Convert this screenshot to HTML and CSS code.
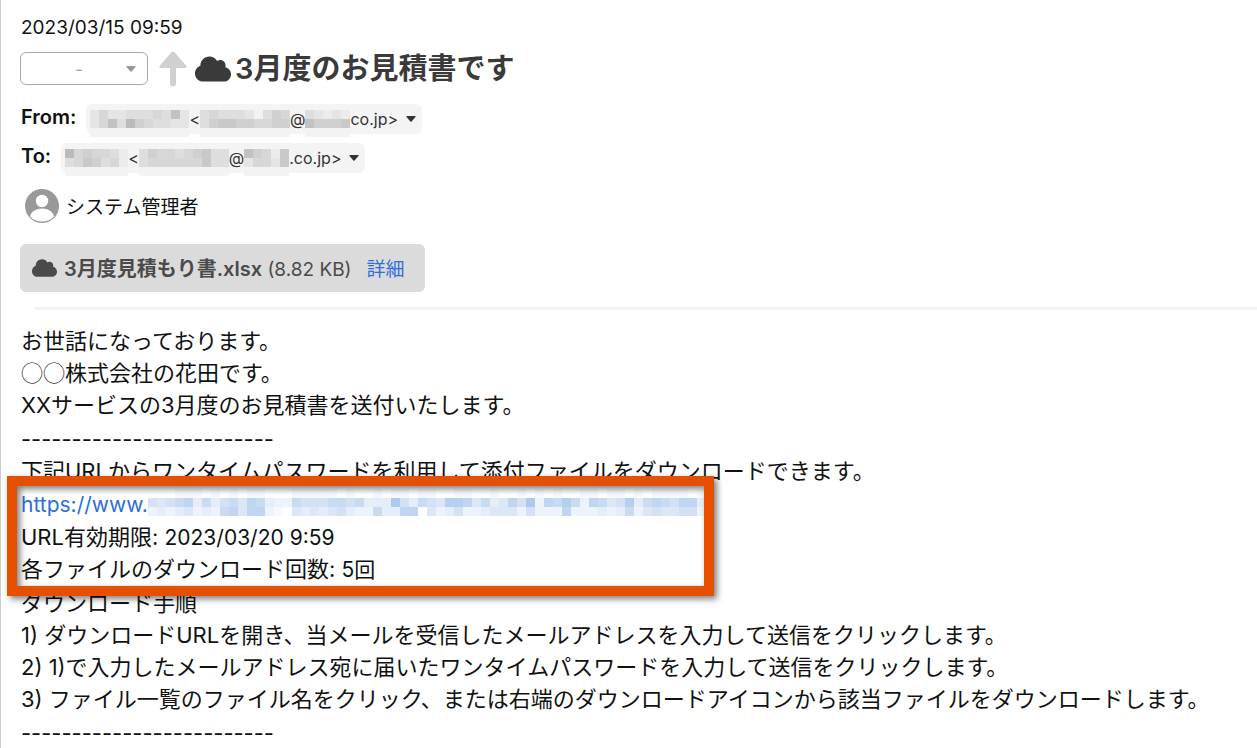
FILE: index.html
```html
<!DOCTYPE html>
<html lang="ja">
<head>
    <meta charset="UTF-8">
    <meta name="viewport" content="width=device-width, initial-scale=1.0">
    <title>3月度のお見積書です</title>
    <link rel="stylesheet" href="styles.css">
</head>
<body>

    <!-- Shared icons -->
    <svg class="icon-defs" aria-hidden="true">
        <symbol id="icon-cloud" viewBox="0 32 640 448">
            <path d="M537.6 226.600c4.100-10.700 6.400-22.400 6.400-34.600 0-53-43-96-96-96-19.700 0-38.100 6-53.300 16.200C367 64.200 315.300 32 256 32c-88.400 0-160 71.600-160 160 0 2.700.1 5.400.2 8.100C40.200 219.800 0 273.200 0 336c0 79.500 64.500 144 144 144h368c70.700 0 128-57.300 128-128 0-61.900-44-113.600-102.400-125.400z"/>
        </symbol>
        <symbol id="icon-caret" viewBox="0 0 10 6">
            <path d="M1 0h8q1 0 .5.900L5.600 5.500q-.6.600-1.200 0L.5.900Q0 0 1 0z"/>
        </symbol>
    </svg>

    <main class="mail">
        <!-- Mail header -->
        <time class="mail-date" datetime="2023-03-15T09:59">2023/03/15 09:59</time>

        <div class="subject-row">
            <div class="status">
                <select class="status-select" aria-label="ステータス">
                    <option>-</option>
                </select>
                <svg class="status-caret" aria-hidden="true"><use href="#icon-caret"/></svg>
            </div>
            <svg class="icon-up" viewBox="0 0 28 36" aria-hidden="true">
                <path d="M14 .5q1 0 1.800 1L27 14.500q1.600 2.500-1 2.500h-9v15.500a3 3 0 0 1-6 0V17H2q-2.600 0-1-2.500L12.200 1.500Q13 .5 14 .5z"/>
            </svg>
            <svg class="icon-cloud" aria-hidden="true"><use href="#icon-cloud"/></svg>
            <h1 class="subject">3月度のお見積書です</h1>
        </div>

        <div class="address-row">
            <span class="address-label">From:</span>
            <button class="address" type="button" aria-label="差出人">
                <svg class="mosaic" data-rows="24223334372,24738543322,00000000000"></svg>
                <span>&lt;</span>
                <svg class="mosaic" data-rows="3433320354,3566554455,0000000000"></svg>
                <span>@</span>
                <svg class="mosaic" data-rows="32121,75556,00000"></svg>
                <span>co.jp&gt;</span>
                <svg class="address-caret" aria-hidden="true"><use href="#icon-caret"/></svg>
            </button>
        </div>

        <div class="address-row">
            <span class="address-label">To:</span>
            <button class="address" type="button" aria-label="宛先">
                <svg class="mosaic" data-rows="8454431,3465341,0000000"></svg>
                <span>&lt;</span>
                <svg class="mosaic" data-rows="3544345633,3444444633,0000000000"></svg>
                <span>@</span>
                <svg class="mosaic" data-rows="75416,24426,00000"></svg>
                <span>.co.jp&gt;</span>
                <svg class="address-caret" aria-hidden="true"><use href="#icon-caret"/></svg>
            </button>
        </div>

        <div class="owner">
            <svg class="avatar" viewBox="0 0 34 34" aria-hidden="true">
                <circle cx="17" cy="17" r="17" fill="#999"/>
                <circle cx="17" cy="12" r="6.200" fill="#fff"/>
                <path d="M5 27.500C6 22.500 11 19.500 17 19.500s11 3 12 8C26 31 22 32.500 17 32.500S8 31 5 27.500z" fill="#fff"/>
            </svg>
            <span class="owner-name">システム管理者</span>
        </div>

        <div class="attachment">
            <svg class="attachment-icon" aria-hidden="true"><use href="#icon-cloud"/></svg>
            <span class="attachment-name"><b>3月度見積もり書.xlsx</b> (8.82 KB)</span>
            <a class="detail-link" href="#">詳細</a>
        </div>

        <hr class="divider">

        <!-- Mail body -->
        <div class="mail-body">
            <p>お世話になっております。<br>
            <span class="circles">◯◯</span>株式会社の花田です。<br>
            XXサービスの3月度のお見積書を送付いたします。</p>

            <p>-------------------------<br>
            下記URLからワンタイムパスワードを利用して添付ファイルをダウンロードできます。</p>

            <div class="download-info">
                <div class="download-url">
                    <a class="url" href="#">https://www.</a>
                    <svg class="mosaic mosaic-blue" data-rows="00011101010110001111101001011011001100100101010011011010111101,54567363564763226555665633395365488746347592768627645836765773,23234232674772104343453226337704235223444252227222323624544552"></svg>
                </div>
                <p>URL有効期限: <span class="value">2023/03/20 9:59</span><br>
                各ファイルのダウンロード回数: <span class="value">5回</span></p>
                <div class="highlight"></div>
            </div>

            <p>ダウンロード手順<br>
            1) ダウンロードURLを開き、当メールを受信したメールアドレスを入力して送信をクリックします。<br>
            2) 1)で入力したメールアドレス宛に届いたワンタイムパスワードを入力して送信をクリックします。<br>
            3) ファイル一覧のファイル名をクリック、または右端のダウンロードアイコンから該当ファイルをダウンロードします。</p>

            <p>-------------------------</p>
        </div>
    </main>

    <script src="script.js"></script>
</body>
</html>
```
FILE: styles.css
```css
* {
    margin: 0;
    padding: 0;
    box-sizing: border-box;
}
body {
    font-family: Inter, "Noto Sans CJK JP", sans-serif;
    font-size: 19px;
    color: #111;
    background: #fff;
    overflow-x: hidden;
}
a {
    color: #2d6fdc;
    text-decoration: none;
}
.icon-defs {
    display: none;
}
.mail {
    display: flex;
    flex-direction: column;
    border-left: 1px solid #ccc;
    padding: 16px 0 0 19px;
}
.mail-date,
.address-row,
.mail-body {
    padding-left: 1px;
}
/* Header */
.mail-date {
    line-height: 24px;
    margin-bottom: 12px;
}
.subject-row {
    display: flex;
    align-items: center;
    height: 33px;
    margin-bottom: 19px;
}
.status {
    position: relative;
    width: 128px;
    height: 33px;
}
.status-select {
    appearance: none;
    width: 100%;
    height: 100%;
    border: 1px solid #aaa;
    border-radius: 6px;
    background: #fff;
    color: #999;
    font: 16px Inter, sans-serif;
    text-align: center;
    text-align-last: center;
    padding-right: 10px;
}
.status-caret {
    position: absolute;
    right: 12px;
    top: 14px;
    width: 10px;
    height: 6px;
    fill: #999;
    pointer-events: none;
}
.icon-up {
    width: 28px;
    height: 36px;
    margin: 0 8px 0 11px;
    fill: #d0d0d0;
}
.icon-cloud {
    width: 36px;
    height: 26px;
    fill: #3a3a3a;
}
.subject {
    font-size: 29px;
    line-height: 33px;
    font-weight: 600;
    color: #3a3a3a;
    margin-left: 4px;
}
/* Addresses */
.address-row {
    display: flex;
    align-items: center;
    gap: 10px;
    height: 30px;
    margin-bottom: 9px;
}
.address-label {
    font-size: 20px;
    font-weight: 600;
    line-height: 24px;
    padding-bottom: 5px;
}
.address {
    display: flex;
    align-items: center;
    height: 30px;
    padding: 0 6px 0 4px;
    border: none;
    border-radius: 6px;
    background: #f4f4f4;
    color: #333;
    font: 16px Inter, sans-serif;
    cursor: pointer;
}
.address .mosaic {
    margin-top: 8px;
}
.address-caret {
    width: 10px;
    height: 6px;
    margin-left: 8px;
    fill: #333;
}
.mosaic {
    display: block;
    flex: none;
}
/* Owner */
.owner {
    display: flex;
    align-items: center;
    gap: 7px;
    height: 34px;
    margin: 7px 0 21px 5px;
}
.owner-name {
    padding-bottom: 2px;
}
.avatar {
    width: 34px;
    height: 34px;
}
/* Attachment */
.attachment {
    display: flex;
    align-items: center;
    align-self: flex-start;
    height: 48px;
    padding: 0 20px 0 12px;
    border-radius: 6px;
    background: #dbdbdb;
    color: #4a4a4a;
}
.attachment b {
    font-size: 20px;
    font-weight: 600;
}
.attachment-name,
.detail-link {
    padding-bottom: 2px;
}
.attachment-icon {
    width: 25px;
    height: 18px;
    margin-right: 7px;
    fill: #4a4a4a;
}
.detail-link {
    margin-left: 15px;
}
.divider {
    height: 3px;
    border: none;
    background: #f2f2f2;
    margin: 15px 0 15px 15px;
}
/* Mail body */
.mail-body {
    display: flex;
    flex-direction: column;
    gap: 2px;
    font-size: 22px;
    line-height: 32px;
}
.circles {
    font-family: "Noto Sans CJK JP", sans-serif;
    font-weight: 300;
    line-height: 1;
}
.url,
.value {
    font-size: 21px;
}
.value {
    line-height: 1;
}
.download-info {
    position: relative;
}
.download-url {
    display: flex;
    align-items: flex-start;
    height: 32px;
}
/* Frame drawn over the download information */
.highlight {
    position: absolute;
    left: -14px;
    top: -13px;
    width: 707px;
    height: 120px;
    border: 10px solid #e55000;
    filter: drop-shadow(3px 3px 3px rgba(0, 0, 0, 0.5));
    pointer-events: none;
}
```
FILE: script.js
```js
// Fill each masked area with 9px blocks, one digit per block (0 = lightest)
const CELL = 9;
const SVG_NS = 'http://www.w3.org/2000/svg';

document.querySelectorAll('.mosaic').forEach((svg) => {
    const rows = svg.dataset.rows.split(',');
    const blue = svg.classList.contains('mosaic-blue');
    svg.setAttribute('width', rows[0].length * CELL);
    svg.setAttribute('height', rows.length * CELL);

    rows.forEach((row, y) => {
        [...row].forEach((level, x) => {
            const n = Number(level);
            const grey = 243 - n * 7;
            const rect = document.createElementNS(SVG_NS, 'rect');
            rect.setAttribute('x', x * CELL);
            rect.setAttribute('y', y * CELL);
            rect.setAttribute('width', CELL);
            rect.setAttribute('height', CELL);
            rect.setAttribute('fill', blue
                ? `rgb(${255 - n * 9}, ${255 - n * 6}, ${255 - n * 2})`
                : `rgb(${grey}, ${grey}, ${grey})`);
            svg.appendChild(rect);
        });
    });
});
```
